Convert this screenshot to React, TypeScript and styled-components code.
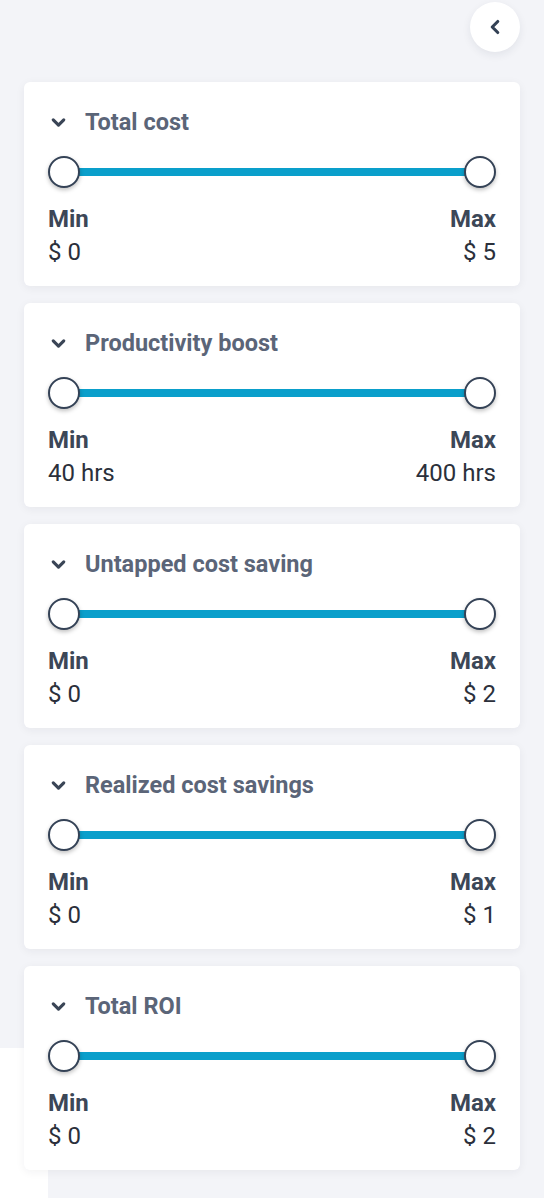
import styled, { createGlobalStyle } from 'styled-components';
import { ChevronDown, ChevronLeft } from 'lucide-react';

const GlobalStyle = createGlobalStyle`
  html, body {
    margin: 0;
    padding: 0;
    background: #f3f4f8;
    font-family: Roboto, 'Noto Sans', sans-serif;
  }
`;

// ─── Styled Components ────────────────────────────────────────────────────────

const Page = styled.div`
  position: relative;
  min-height: 1198px;
  background: #f3f4f8;
  box-sizing: border-box;
  padding: 2px 24px 26px;
`;

const StrayPanel = styled.div`
  position: absolute;
  left: 0;
  top: 1048px;
  width: 48px;
  height: 150px;
  background: #ffffff;
`;

const TopBar = styled.div`
  display: flex;
  justify-content: flex-end;
  margin-bottom: 30px;
`;

const BackButton = styled.button`
  width: 50px;
  height: 50px;
  border-radius: 50%;
  border: none;
  background: #ffffff;
  box-shadow: 0 3px 8px rgba(30, 41, 59, 0.08);
  display: flex;
  align-items: center;
  justify-content: center;
  color: #334155;
  padding: 0;
`;

const List = styled.div`
  position: relative;
  display: flex;
  flex-direction: column;
  gap: 17px;
`;

const Card = styled.div`
  background: #ffffff;
  border-radius: 6px;
  box-shadow: 0 2px 10px rgba(30, 41, 59, 0.06);
  padding: 24px 24px 20px;
  height: 204px;
  box-sizing: border-box;
`;

const CardHeader = styled.div`
  display: flex;
  align-items: center;
  gap: 16px;
  height: 32px;
  color: #5b6578;
`;

const Title = styled.span`
  font-size: 23.5px;
  font-weight: 700;
`;

const SliderWrap = styled.div`
  position: relative;
  height: 34px;
  margin-top: 17px;
  display: flex;
  align-items: center;
`;

const Track = styled.div`
  flex: 1;
  height: 8px;
  margin: 0 16px;
  background: #0a9fcb;
`;

const Thumb = styled.div<{ $side: 'left' | 'right' }>`
  position: absolute;
  top: 1px;
  ${({ $side }) => ($side === 'left' ? 'left: 0;' : 'right: 0;')}
  width: 28px;
  height: 28px;
  border-radius: 50%;
  background: #ffffff;
  border: 2px solid #344256;
  box-shadow: 0 2px 4px rgba(0, 0, 0, 0.25);
`;

const Range = styled.div`
  display: flex;
  justify-content: space-between;
  margin-top: 16px;
`;

const RangeCol = styled.div<{ $align: 'left' | 'right' }>`
  display: flex;
  flex-direction: column;
  align-items: ${({ $align }) => ($align === 'left' ? 'flex-start' : 'flex-end')};
  gap: 5px;
`;

const RangeLabel = styled.span`
  font-size: 24px;
  font-weight: 700;
  color: #3c4757;
  line-height: 28px;
`;

const RangeValue = styled.span`
  font-size: 24px;
  color: #2b303b;
  line-height: 28px;
`;

// ─── Data ─────────────────────────────────────────────────────────────────────

const filters = [
  { title: 'Total cost', min: '$ 0', max: '$ 5' },
  { title: 'Productivity boost', min: '40 hrs', max: '400 hrs' },
  { title: 'Untapped cost saving', min: '$ 0', max: '$ 2' },
  { title: 'Realized cost savings', min: '$ 0', max: '$ 1' },
  { title: 'Total ROI', min: '$ 0', max: '$ 2' },
];

// ─── Component ────────────────────────────────────────────────────────────────

export default function App() {
  return (
    <Page>
      <GlobalStyle />
      <StrayPanel />
      <TopBar>
        <BackButton aria-label="Collapse">
          <ChevronLeft size={22} strokeWidth={3.4} />
        </BackButton>
      </TopBar>

      <List>
        {filters.map((f) => (
          <Card key={f.title}>
            <CardHeader>
              <ChevronDown size={21} strokeWidth={3.6} color="#3a4556" />
              <Title>{f.title}</Title>
            </CardHeader>

            <SliderWrap>
              <Track />
              <Thumb $side="left" />
              <Thumb $side="right" />
            </SliderWrap>

            <Range>
              <RangeCol $align="left">
                <RangeLabel>Min</RangeLabel>
                <RangeValue>{f.min}</RangeValue>
              </RangeCol>
              <RangeCol $align="right">
                <RangeLabel>Max</RangeLabel>
                <RangeValue>{f.max}</RangeValue>
              </RangeCol>
            </Range>
          </Card>
        ))}
      </List>
    </Page>
  );
}
